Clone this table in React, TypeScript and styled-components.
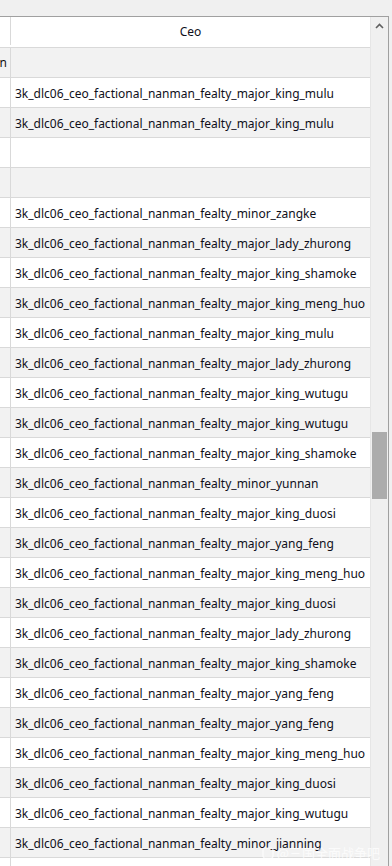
import React from "react";
import styled, { createGlobalStyle } from "styled-components";

const Global = createGlobalStyle`
  html, body { margin: 0; padding: 0; background: #f0f0f0; }
  body { font-family: "Noto Sans", "Noto Sans CJK SC", sans-serif; overflow: hidden; }
`;

const Page = styled.div`
  width: 392px;
  height: 866px;
  overflow: hidden;
  background: #f0f0f0;
  padding-top: 16px;
  box-sizing: border-box;
  position: relative;
`;

const Frame = styled.div`
  width: 389px;
  height: 850px;
  box-sizing: border-box;
  border-top: 1px solid #a0a0a0;
  border-right: 1px solid #a0a0a0;
  display: flex;
  background: #ffffff;
  overflow: hidden;
`;

const Table = styled.div`
  width: 370px;
  display: flex;
  flex-direction: column;
`;

const Row = styled.div<{ $alt?: boolean; $header?: boolean }>`
  display: grid;
  grid-template-columns: 11px 1fr;
  height: ${(p) => (p.$header ? 31 : 30)}px;
  flex-shrink: 0;
  box-sizing: border-box;
  padding: ${(p) => (p.$header ? "0 0 2px" : "1px 0 0")};
  border-bottom: 1px solid #d9d9d9;
  background: ${(p) => (p.$alt ? "#f2f2f2" : "#ffffff")};
`;

const Stub = styled.div`
  border-right: 1px solid #d9d9d9;
  margin: -1px 0 0;
  display: flex;
  align-items: center;
  justify-content: flex-end;
  padding-right: 3px;
  overflow: hidden;
  font-size: 12px;
  color: #111;
  white-space: nowrap;
`;

const Cell = styled.div<{ $center?: boolean }>`
  display: flex;
  align-items: center;
  justify-content: ${(p) => (p.$center ? "center" : "flex-start")};
  padding-left: ${(p) => (p.$center ? 0 : 4)}px;
  font-size: 12px;
  color: #0f0f1a;
  white-space: nowrap;
  overflow: hidden;
`;

const Scrollbar = styled.div`
  width: 18px;
  background: #f0f0f0;
  border-left: 1px solid #e6e6e6;
  box-sizing: border-box;
  position: relative;
`;

const Arrow = styled.div`
  height: 17px;
  display: flex;
  align-items: center;
  justify-content: center;
`;

const Thumb = styled.div`
  position: absolute;
  left: 1px;
  width: 15px;
  top: 415px;
  height: 67px;
  background: #acacac;
`;

const Watermark = styled.div`
  position: absolute;
  right: 12px;
  bottom: 4px;
  display: flex;
  align-items: center;
  gap: 3px;
  font-size: 13px;
  color: rgba(255, 255, 255, 0.75);
  font-family: "Noto Sans CJK SC", sans-serif;
`;

const P = "3k_dlc06_ceo_factional_nanman_fealty_";

const rows: { stub?: string; text: string }[] = [
  { stub: "n", text: "" },
  { text: P + "major_king_mulu" },
  { text: P + "major_king_mulu" },
  { text: "" },
  { text: "" },
  { text: P + "minor_zangke" },
  { text: P + "major_lady_zhurong" },
  { text: P + "major_king_shamoke" },
  { text: P + "major_king_meng_huo" },
  { text: P + "major_king_mulu" },
  { text: P + "major_lady_zhurong" },
  { text: P + "major_king_wutugu" },
  { text: P + "major_king_wutugu" },
  { text: P + "major_king_shamoke" },
  { text: P + "minor_yunnan" },
  { text: P + "major_king_duosi" },
  { text: P + "major_yang_feng" },
  { text: P + "major_king_meng_huo" },
  { text: P + "major_king_duosi" },
  { text: P + "major_lady_zhurong" },
  { text: P + "major_king_shamoke" },
  { text: P + "major_yang_feng" },
  { text: P + "major_yang_feng" },
  { text: P + "major_king_meng_huo" },
  { text: P + "major_king_duosi" },
  { text: P + "major_king_wutugu" },
  { text: P + "minor_jianning" },
  { text: "" },
];

export default function App() {
  return (
    <Page>
      <Global />
      <Frame>
        <Table>
          <Row $header>
            <Stub />
            <Cell $center>Ceo</Cell>
          </Row>
          {rows.map((r, i) => (
            <Row key={i} $alt={i % 2 === 0}>
              <Stub>{r.stub}</Stub>
              <Cell>{r.text}</Cell>
            </Row>
          ))}
        </Table>
        <Scrollbar>
          <Arrow>
            <svg width="9" height="6" viewBox="0 0 9 6">
              <path d="M1 5 L4.5 1.5 L8 5" fill="none" stroke="#606060" strokeWidth="1.6" />
            </svg>
          </Arrow>
          <Thumb />
        </Scrollbar>
      </Frame>
      <Watermark>
        <svg width="12" height="12" viewBox="0 0 12 12">
          <rect x="1" y="1" width="10" height="10" rx="2" fill="none" stroke="rgba(255,255,255,0.75)" strokeWidth="1.2" />
        </svg>
        <span>@三国全面战争吧</span>
      </Watermark>
    </Page>
  );
}
